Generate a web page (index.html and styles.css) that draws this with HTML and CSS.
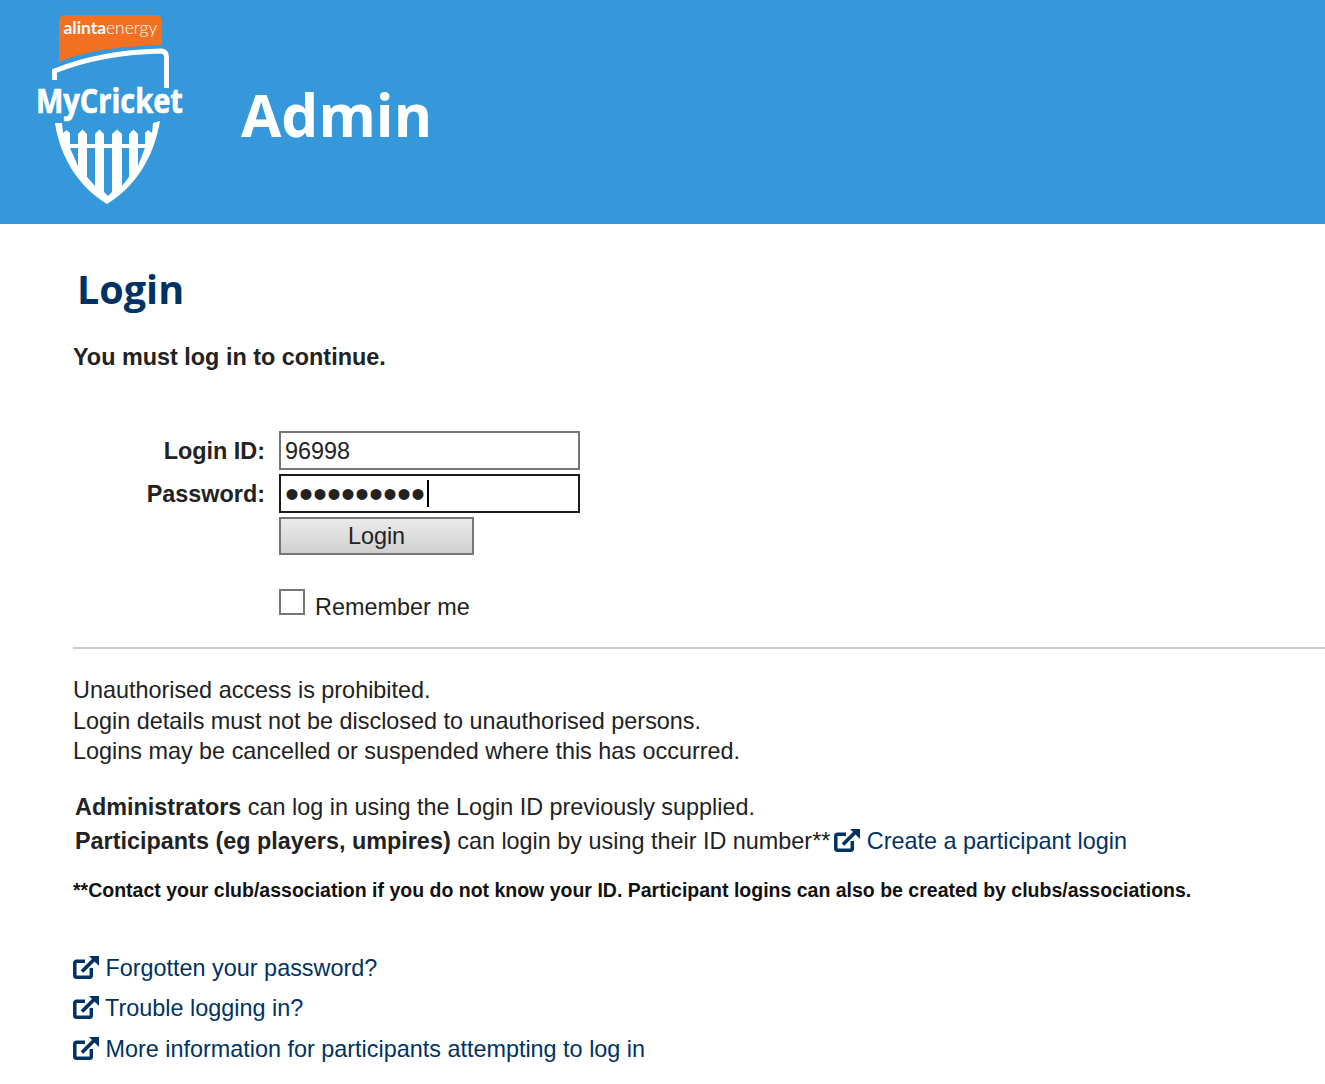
FILE: index.html
```html
<!DOCTYPE html>
<html lang="en">

<head>
    <meta charset="UTF-8">
    <meta name="viewport" content="width=device-width, initial-scale=1.0">
    <title>MyCricket Admin</title>
    <link rel="stylesheet" href="styles.css">
</head>

<body>
    <svg class="icon-defs" width="0" height="0">
        <symbol id="ext-link" viewBox="0 0 26 23">
            <path d="M18.3 12v7.5a1.7 1.7 0 0 1-1.7 1.7H3.5a1.7 1.7 0 0 1-1.7-1.7V7a1.7 1.7 0 0 1 1.7-1.7H12" fill="none" stroke="currentColor" stroke-width="3.5"/>
            <path d="M9 15.5L21 3.5" fill="none" stroke="currentColor" stroke-width="3.8"/>
            <path d="M16 0h10v10z" fill="currentColor"/>
        </symbol>
    </svg>

    <header class="site-header">
        <svg class="logo" viewBox="30 0 170 224" width="170" height="224">
            <path d="M59 21a6 6 0 0 1 6-6h91a6 6 0 0 1 6 6v24c-38 1-75 5-103 17z" fill="#f36f21"/>
            <text class="logo-sponsor" x="63.5" y="34"><tspan class="logo-sponsor-bold">alinta</tspan>energy</text>
            <path d="M54.5 80v-9c32-13 68-19 106-20q6 0 6 6v31" fill="none" stroke="#fff" stroke-width="5"/>
            <text class="logo-name" transform="translate(36 113) scale(1 1.2)">MyCricket</text>
            <path fill-rule="evenodd" fill="#fff" d="M55 123C60 158 80 188 107 204C134 188 154 158 160 121L153 123L152 133L148 130L145 133V144H138V134L133.5 129.5L129 134V144H122V134L117 129.5L112 134V144H104V134L99.5 129.5L95 134V144H87V134L82.5 129.5L78 134V144H70V133L66.5 130L63 133L62 123ZM70 148H78V166ZM87 148H95V186L87 177ZM104 148H112V192L108 196L104 192ZM122 148H129V177L122 186ZM138 148H145L138 166Z"/>
        </svg>
        <h1 class="site-title">Admin</h1>
    </header>

    <main class="content">
        <h2 class="page-title">Login</h2>
        <p class="notice">You must log in to continue.</p>

        <form class="login-form">
            <label class="field-label" for="login-id">Login ID:</label>
            <input class="field" id="login-id" type="text" value="96998">

            <label class="field-label" for="password">Password:</label>
            <div class="field-wrap">
                <input class="field field-focus" id="password" type="password" value="1234567890">
                <span class="caret"></span>
            </div>

            <button class="login-btn" type="button">Login</button>

            <label class="remember">
                <span class="check"></span>
                <span>Remember me</span>
            </label>
        </form>

        <hr class="divider">

        <p class="warning">
            Unauthorised access is prohibited.<br>
            Login details must not be disclosed to unauthorised persons.<br>
            Logins may be cancelled or suspended where this has occurred.
        </p>

        <div class="who">
            <p><b>Administrators</b> can log in using the Login ID previously supplied.</p>
            <p><b>Participants (eg players, umpires)</b> can login by using their ID number**<a class="link" href="#"><svg class="ext-icon"><use href="#ext-link"/></svg> Create a participant login</a></p>
        </div>

        <p class="small-note">**Contact your club/association if you do not know your ID. Participant logins can also be created by clubs/associations.</p>

        <ul class="help-links">
            <li><a class="link" href="#"><svg class="ext-icon"><use href="#ext-link"/></svg> Forgotten your password?</a></li>
            <li><a class="link" href="#"><svg class="ext-icon"><use href="#ext-link"/></svg> Trouble logging in?</a></li>
            <li><a class="link" href="#"><svg class="ext-icon"><use href="#ext-link"/></svg> More information for participants attempting to log in</a></li>
        </ul>
    </main>
</body>

</html>
```

FILE: styles.css
```css
* {
    box-sizing: border-box;
}

body {
    margin: 0;
    background: #fff;
    color: #222;
    font-family: "Liberation Sans", Arial, sans-serif;
    font-size: 23.4px;
    overflow-x: hidden;
}

.icon-defs {
    display: block;
    height: 0;
}

.site-header {
    display: flex;
    align-items: center;
    height: 224px;
    background: #3498db;
}

.logo {
    flex: none;
    margin-left: 30px;
}

.logo-sponsor {
    fill: #fff;
    font-family: Lato, sans-serif;
    font-size: 17.4px;
    font-weight: 300;
}

.logo-sponsor-bold {
    font-weight: 700;
}

.logo-name {
    fill: #fff;
    stroke: #fff;
    stroke-width: 0.6px;
    font-family: "Open Sans", sans-serif;
    font-size: 29px;
    font-weight: 700;
}

.site-title {
    margin: 4px 0 0 41px;
    color: #fff;
    font-family: "Open Sans", sans-serif;
    font-size: 58.5px;
    font-weight: 700;
}

.content {
    padding: 40px 0 0 73px;
}

.page-title {
    margin: 0 0 0 4px;
    color: #003263;
    font-family: "Open Sans", sans-serif;
    font-size: 39.5px;
    font-weight: 700;
    line-height: 50px;
}

.notice {
    margin: 28px 0 0;
    font-weight: 700;
    line-height: 30px;
}

.login-form {
    display: grid;
    grid-template-columns: 206px 301px;
    row-gap: 4px;
    margin-top: 59px;
}

.field-label {
    padding: 1px 14px 0 0;
    font-weight: 700;
    line-height: 38px;
    text-align: right;
}

.field-wrap {
    position: relative;
}

.field {
    display: block;
    width: 100%;
    height: 39px;
    padding: 1px 4px 0;
    border: 2px solid #767676;
    background: #fff;
    color: #222;
    font: inherit;
    outline: none;
}

.field-focus {
    border-color: #1a1a1a;
    font-size: 40px;
}

.caret {
    position: absolute;
    top: 6px;
    left: 148px;
    width: 2px;
    height: 27px;
    background: #000;
}

.login-btn {
    grid-column: 2;
    width: 195px;
    height: 38px;
    padding: 0;
    border: 2px solid #767676;
    background: linear-gradient(#ebebeb, #d0d0d0);
    color: #222;
    font: inherit;
}

.remember {
    grid-column: 2;
    display: flex;
    align-items: flex-end;
    gap: 10px;
    margin-top: 30px;
    line-height: 30px;
}

.check {
    width: 26px;
    height: 26px;
    margin-bottom: 7px;
    border: 2px solid #767676;
    background: #fff;
}

.divider {
    height: 2px;
    margin: 25px 0 0;
    border: 0;
    background: #ccc;
}

.warning {
    margin: 26px 0 0;
    line-height: 30.5px;
}

.who {
    margin: 23px 0 0 2px;
}

.who p {
    margin: 0;
    line-height: 34px;
}

.link {
    color: #003263;
    text-decoration: none;
}

.ext-icon {
    width: 26px;
    height: 23px;
    margin-left: 4px;
    vertical-align: -3px;
}

.small-note {
    margin: 17px 0 0;
    color: #111;
    font-size: 19.5px;
    font-weight: 700;
    line-height: 30px;
}

.help-links {
    margin: 43px 0 0;
    padding: 0;
    list-style: none;
}

.help-links li {
    height: 40.5px;
    line-height: 40.5px;
}

.help-links .ext-icon {
    margin-left: 0;
}
```
